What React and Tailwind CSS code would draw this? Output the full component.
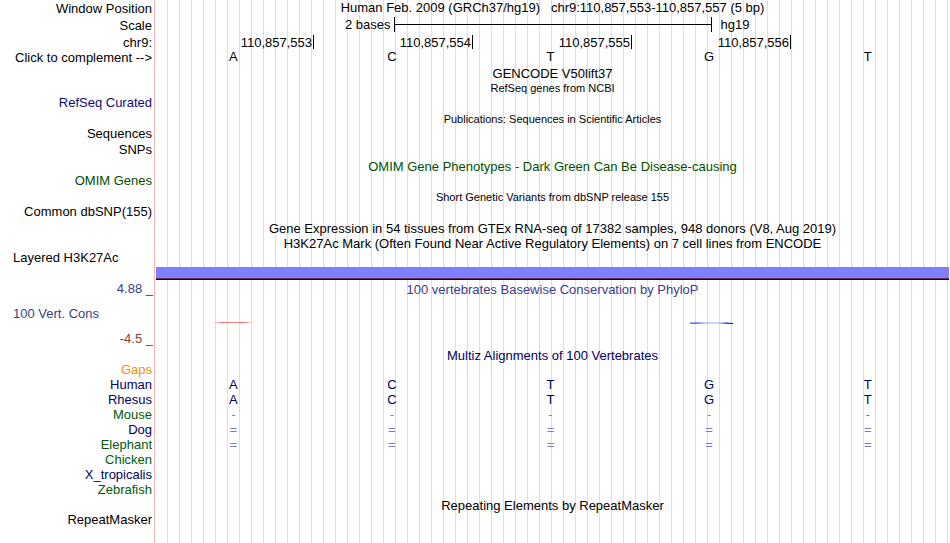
const bases = ['A', 'C', 'T', 'G', 'T']
const positions = ['110,857,553', '110,857,554', '110,857,555', '110,857,556']

const alignments = [
  { name: 'Gaps', color: 'text-[#ee9010]', cells: [] },
  { name: 'Human', color: 'text-[#000064]', cells: bases },
  { name: 'Rhesus', color: 'text-[#000064]', cells: bases },
  { name: 'Mouse', color: 'text-[#005a0a]', cells: ['-', '-', '-', '-', '-'] },
  { name: 'Dog', color: 'text-[#000064]', cells: ['=', '=', '=', '=', '='] },
  { name: 'Elephant', color: 'text-[#005a0a]', cells: ['=', '=', '=', '=', '='] },
  { name: 'Chicken', color: 'text-[#005a0a]', cells: [] },
  { name: 'X_tropicalis', color: 'text-[#000064]', cells: [] },
  { name: 'Zebrafish', color: 'text-[#005a0a]', cells: [] },
]

function Row({ label, height = 'h-[15px]', labelClass = 'text-right pr-[2px]', children }) {
  return (
    <div className={`flex ${height}`}>
      <div className={`w-[155px] shrink-0 pt-px ${labelClass}`}>
        <div className="pr-px">{label}</div>
      </div>
      <div className="flex-1 min-w-0">{children}</div>
    </div>
  )
}

function Title({ height, color = 'text-black', small = false, children }) {
  return (
    <Row height={height}>
      <h2 className={`text-center whitespace-pre ${small ? 'pt-px text-[11px] leading-[15px]' : ''} ${color}`}>
        {children}
      </h2>
    </Row>
  )
}

function Cells({ cells, className = '' }) {
  return (
    <div className={`grid grid-cols-5 pr-[2px] text-center ${className}`}>
      {cells.map((c, i) => (
        <span key={i} className={`pr-[2px] ${c === '-' || c === '=' ? 'text-[#7c7cb0]' : ''}`}>{c}</span>
      ))}
    </div>
  )
}

function ScaleBar() {
  return (
    <div className="flex">
      <span className="w-[30%] text-right pr-[3px]">2 bases</span>
      <div className="w-[40%] h-[15px] border-x border-black flex items-center">
        <div className="w-full h-px bg-black" />
      </div>
      <span className="pl-[9px]">hg19</span>
    </div>
  )
}

function PhyloPSignal() {
  return (
    <div className="grid grid-cols-5 pt-[16px] justify-items-center">
      <div className="col-start-1 pr-[4px]">
        <svg width="40" height="3" viewBox="0 0 40 3">
          <defs>
            <linearGradient id="neg">
              <stop offset="0" stopColor="#ff6464" stopOpacity="0" />
              <stop offset="0.25" stopColor="#ff6464" />
              <stop offset="0.5" stopColor="#ff8c8c" />
              <stop offset="0.75" stopColor="#ff6464" />
              <stop offset="1" stopColor="#ff6464" stopOpacity="0" />
            </linearGradient>
          </defs>
          <rect y="1" width="40" height="1" fill="url(#neg)" />
        </svg>
      </div>
      <svg className="col-start-4" width="44" height="4" viewBox="0 0 44 4">
        <defs>
          <linearGradient id="pos">
            <stop offset="0" stopColor="#5050ff" />
            <stop offset="0.15" stopColor="#3c3cff" />
            <stop offset="0.4" stopColor="#a0a0ff" />
            <stop offset="0.65" stopColor="#a0a0ff" />
            <stop offset="0.85" stopColor="#3c3cff" />
            <stop offset="1" stopColor="#0000ff" />
          </linearGradient>
        </defs>
        <path d="M0 1.4 H36 L43 2 V3 H36 L30 2.4 H16 L7 2.8 H0 Z" fill="url(#pos)" />
      </svg>
    </div>
  )
}

export default function App() {
  return (
    <main className="min-h-screen overflow-hidden font-['Liberation_Sans',Arial,sans-serif] text-[13px] leading-[15px] text-black whitespace-nowrap bg-[linear-gradient(to_right,#fff_154px,#ffb4b4_154px,#ffb4b4_155px,#fff_155px,#fff_156px,transparent_156px),repeating-linear-gradient(to_right,#fff_0px,#fff_11px,#dcdcf8_11px,#dcdcf8_12px)]">
      <Row label="Window Position" height="h-[17px]">
        <h1 className="text-center whitespace-pre">
          {'Human Feb. 2009 (GRCh37/hg19)   chr9:110,857,553-110,857,557 (5 bp)'}
        </h1>
      </Row>
      <Row label="Scale" height="h-[17px]">
        <ScaleBar />
      </Row>
      <Row label="chr9:">
        <div className="grid grid-cols-5 pt-px">
          {positions.map((p) => (
            <div key={p} className="text-right pr-px h-[14px] border-r border-black">{p}</div>
          ))}
        </div>
      </Row>
      <Row label={<button type="button">Click to complement --&gt;</button>} height="h-[17px]">
        <Cells cells={bases} />
      </Row>

      <Title height="h-[14px]">GENCODE V50lift37</Title>
      <Title height="h-[14px]" small>RefSeq genes from NCBI</Title>
      <Row label="RefSeq Curated" labelClass="text-right pr-[2px] text-[#0c0c78]" height="h-[17px]" />
      <Title height="h-[14px]" small>Publications: Sequences in Scientific Articles</Title>
      <Row label="Sequences" height="h-[16px]" />
      <Row label="SNPs" height="h-[18px]" />
      <Title height="h-[13px]" color="text-[#005000]">OMIM Gene Phenotypes - Dark Green Can Be Disease-causing</Title>
      <Row label="OMIM Genes" labelClass="text-right pr-[2px] text-[#005000]" height="h-[17px]" />
      <Title height="h-[14px]" small>Short Genetic Variants from dbSNP release 155</Title>
      <Row label="Common dbSNP(155)" height="h-[18px]" />
      <Title height="h-[15px]">Gene Expression in 54 tissues from GTEx RNA-seq of 17382 samples, 948 donors (V8, Aug 2019)</Title>
      <Title height="h-[13px]">H3K27Ac Mark (Often Found Near Active Regulatory Elements) on 7 cell lines from ENCODE</Title>
      <Row label="Layered H3K27Ac" labelClass="pl-[13px]" height="h-[18px]" />
      <Row height="h-[13px]">
        <div className="ml-px mr-px h-[13px] bg-[#8080ff] border-b border-black flex items-end">
          <div className="w-full h-px bg-[#602860]" />
        </div>
      </Row>

      <Row label="4.88 _" labelClass="text-right pr-px text-[#3c3c8c]" height="h-[25px]">
        <h2 className="pt-[2px] text-center text-[#3c3c8c]">100 vertebrates Basewise Conservation by PhyloP</h2>
      </Row>
      <Row label="100 Vert. Cons" labelClass="pl-[13px] text-[#3c3c8c]" height="h-[25px]">
        <PhyloPSignal />
      </Row>
      <Row label="-4.5 _" labelClass="text-right pr-px text-[#8c3c3c]" height="h-[18px]" />

      <Title height="h-[13px]" color="text-[#000064]">Multiz Alignments of 100 Vertebrates</Title>
      {alignments.map((a) => (
        <Row key={a.name} label={a.name} labelClass={`text-right pr-[2px] ${a.color}`}>
          <Cells cells={a.cells} className="pt-px text-[#000064]" />
        </Row>
      ))}
      <div className="pt-[2px]">
        <Title height="h-[13px]">Repeating Elements by RepeatMasker</Title>
        <Row label="RepeatMasker" />
      </div>
    </main>
  )
}
